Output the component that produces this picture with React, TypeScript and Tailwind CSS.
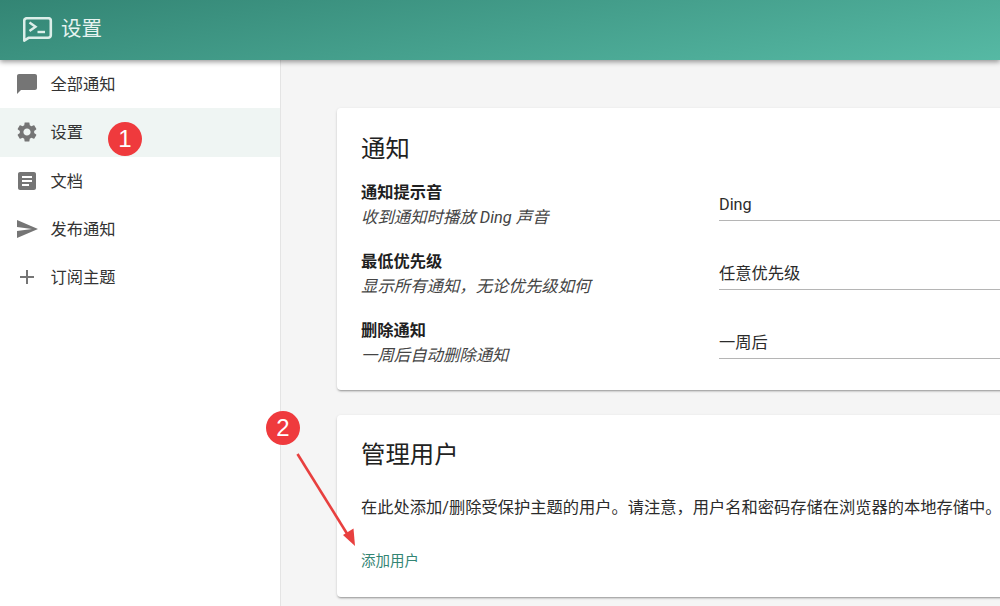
import React from "react";

const FONT = "font-['Roboto','Noto_Sans_CJK_SC',sans-serif]";

const icons: Record<string, string> = {
  chat: "M20 2H4c-1.1 0-1.99.9-1.99 2L2 22l4-4h14c1.1 0 2-.9 2-2V4c0-1.1-.9-2-2-2z",
  settings:
    "M19.14 12.94c.04-.3.06-.61.06-.94 0-.32-.02-.64-.07-.94l2.03-1.58c.18-.14.23-.41.12-.61l-1.92-3.32c-.12-.22-.37-.29-.59-.22l-2.39.96c-.5-.38-1.03-.7-1.62-.94l-.36-2.54c-.04-.24-.24-.41-.48-.41h-3.84c-.24 0-.43.17-.47.41l-.36 2.54c-.59.24-1.13.57-1.62.94l-2.39-.96c-.22-.08-.47 0-.59.22L2.74 8.87c-.12.21-.08.47.12.61l2.03 1.58c-.05.3-.09.63-.09.94s.02.64.07.94l-2.03 1.58c-.18.14-.23.41-.12.61l1.92 3.32c.12.22.37.29.59.22l2.39-.96c.5.38 1.03.7 1.62.94l.36 2.54c.05.24.24.41.48.41h3.84c.24 0 .44-.17.47-.41l.36-2.54c.59-.24 1.13-.56 1.62-.94l2.39.96c.22.08.47 0 .59-.22l1.92-3.32c.12-.22.07-.47-.12-.61l-2.01-1.58zM12 15.6c-1.98 0-3.6-1.62-3.6-3.6s1.62-3.6 3.6-3.6 3.6 1.62 3.6 3.6-1.62 3.6-3.6 3.6z",
  article:
    "M19 3H5c-1.1 0-2 .9-2 2v14c0 1.1.9 2 2 2h14c1.1 0 2-.9 2-2V5c0-1.1-.9-2-2-2zm-5 14H7v-2h7v2zm3-4H7v-2h10v2zm0-4H7V7h10v2z",
  send: "M2.01 21 23 12 2.01 3 2 10l15 2-15 2z",
  add: "M19 13h-6v6h-2v-6H5v-2h6V5h2v6h6v2z",
};

function NavItem({ icon, label, active }: { icon: string; label: string; active?: boolean }) {
  return (
    <div className={`flex h-[48.25px] items-center pl-[14.5px] ${active ? "bg-[#eff5f3]" : ""}`}>
      <svg viewBox="0 0 24 24" className="h-6 w-6 fill-[#757575]">
        <path d={icons[icon]} />
      </svg>
      <span className="mt-[2px] ml-3 text-[16.25px] leading-6 text-[#333333]">{label}</span>
    </div>
  );
}

function SettingRow({ title, desc, value }: { title: string; desc: string; value: string }) {
  return (
    <div className="flex items-start">
      <div className="w-[358px] shrink-0">
        <div className="text-[16.25px] leading-6 font-bold text-[#1f1f1f]">{title}</div>
        <div className="mt-px text-[16.4px] leading-6 text-[#444444] italic">{desc}</div>
      </div>
      <div className="mt-[8px] flex h-[32px] flex-1 items-center border-b border-[#b5b5b5] pt-[2px] text-[16.25px] text-[#2b2b2b]">
        {value}
      </div>
    </div>
  );
}

function Badge({ n, className }: { n: string; className: string }) {
  return (
    <div
      className={`absolute flex h-[34px] w-[34px] items-center justify-center rounded-full bg-[#ef3a3d] font-['Liberation_Sans',sans-serif] text-[24px] text-white ${className}`}
    >
      {n}
    </div>
  );
}

export default function App() {
  return (
    <div className={`relative h-[606px] w-[1000px] overflow-hidden bg-[#f5f5f5] ${FONT}`}>
      <header className="relative z-10 flex h-[60px] items-center bg-[linear-gradient(170deg,#338574_0%,#56b9a4_100%)] pl-[23px] shadow-[0_2px_5px_rgba(0,0,0,0.4)]">
        <svg viewBox="0 0 30 26" className="h-[26px] w-[30px]" fill="none">
          <path
            d="M1.2 23.6V3.8a2.6 2.6 0 0 1 2.6-2.6h21.4a2.6 2.6 0 0 1 2.6 2.6v14.4a2.6 2.6 0 0 1-2.6 2.6H5.5z"
            stroke="#dceee9"
            strokeWidth="2.6"
            strokeLinejoin="round"
          />
          <path d="M6.5 5.5l6 4.2-6 4.2" stroke="#dceee9" strokeWidth="2.4" />
          <path d="M14.5 15h7.5" stroke="#dceee9" strokeWidth="2.4" />
        </svg>
        <span className="mb-[2px] ml-[8px] text-[20.5px] text-[#e6f3f0]">设置</span>
      </header>

      <div className="flex h-[546px]">
        <nav className="w-[281px] shrink-0 border-r border-[#e4e4e4] bg-white">
          <NavItem icon="chat" label="全部通知" />
          <NavItem icon="settings" label="设置" active />
          <NavItem icon="article" label="文档" />
          <NavItem icon="send" label="发布通知" />
          <NavItem icon="add" label="订阅主题" />
        </nav>

        <main className="flex flex-col gap-[25px] pt-[48px] pl-[56px]">
          <section className="h-[282px] w-[760px] rounded bg-white px-6 pt-[25px] shadow-[0_2px_2px_-1px_rgba(0,0,0,0.3),0_1px_3px_rgba(0,0,0,0.15)]">
            <h2 className="text-[24.4px] leading-8 text-[#222222]">通知</h2>
            <div className="mt-4 flex flex-col gap-[20px]">
              <SettingRow title="通知提示音" desc="收到通知时播放 Ding 声音" value="Ding" />
              <SettingRow title="最低优先级" desc="显示所有通知，无论优先级如何" value="任意优先级" />
              <SettingRow title="删除通知" desc="一周后自动删除通知" value="一周后" />
            </div>
          </section>

          <section className="h-[182px] w-[760px] rounded bg-white p-6 shadow-[0_2px_2px_-1px_rgba(0,0,0,0.3),0_1px_3px_rgba(0,0,0,0.15)]">
            <h2 className="text-[24.4px] leading-8 text-[#222222]">管理用户</h2>
            <p className="mt-[25px] text-[16.25px] leading-6 whitespace-nowrap text-[#2b2b2b]">
              在此处添加/删除受保护主题的用户。请注意，用户名和密码存储在浏览器的本地存储中。
            </p>
            <div className="mt-[30px] text-[14.5px] leading-6 text-[#338574]">添加用户</div>
          </section>
        </main>
      </div>

      <Badge n="1" className="top-[122px] left-[108px]" />
      <Badge n="2" className="top-[411px] left-[266px]" />
      <svg className="absolute top-[450px] left-[294px] h-[100px] w-[66px]" viewBox="0 0 66 100" fill="none">
        <path d="M3.5 4 L57 90" stroke="#e8403f" strokeWidth="2.6" />
        <path d="M61 96 L49 85 L59.5 78.5 z" fill="#e8403f" />
      </svg>
    </div>
  );
}
